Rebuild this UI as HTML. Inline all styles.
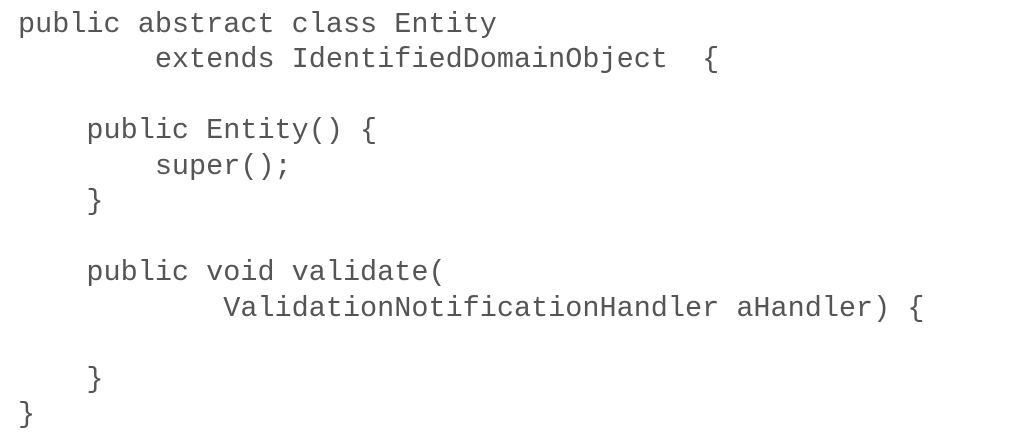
<!DOCTYPE html>
<html><head><style>
html,body{margin:0;padding:0;background:#fff;width:1018px;height:436px;overflow:hidden}
pre{margin:0;position:absolute;left:18px;top:7px;font-family:"Courier New","Liberation Mono",monospace;font-size:28.5px;line-height:35.45px;color:#555}
</style></head><body>
<pre>public abstract class Entity
        extends IdentifiedDomainObject  {

    public Entity() {
        super();
    }

    public void validate(
            ValidationNotificationHandler aHandler) {

    }
}</pre>
</body></html>
